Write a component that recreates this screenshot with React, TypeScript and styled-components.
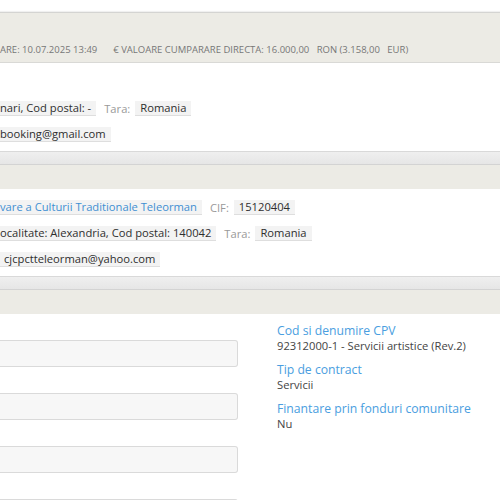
import styled, { createGlobalStyle } from "styled-components";

const Global = createGlobalStyle`
  html, body {
    margin: 0;
    padding: 0;
    background: #fff;
    font-family: "Open Sans", "Noto Sans", Arial, sans-serif;
    overflow: hidden;
  }
`;

export default function App() {
  return (
    <>
      <Global />
      <Page>
        <Summary>
          <SummaryItem>ARE: 10.07.2025 13:49</SummaryItem>
          <SummaryItem $gap>
            € VALOARE CUMPARARE DIRECTA: 16.000,00&nbsp;&nbsp; RON (3.158,00&nbsp;&nbsp; EUR)
          </SummaryItem>
        </Summary>

        <Body $top={38} $bottom={9}>
          <Row>
            <Chip $cut>nari, Cod postal: -</Chip>
            <Label>Tara:</Label>
            <Chip>Romania</Chip>
          </Row>
          <Row>
            <Chip $cut>booking@gmail.com</Chip>
          </Row>
        </Body>

        <Strip />
        <Head />
        <Body $top={11} $bottom={9}>
          <Row>
            <Chip $cut $link>vare a Culturii Traditionale Teleorman</Chip>
            <Label>CIF:</Label>
            <Chip>15120404</Chip>
          </Row>
          <Row>
            <Chip $cut>ocalitate: Alexandria, Cod postal: 140042</Chip>
            <Label>Tara:</Label>
            <Chip>Romania</Chip>
          </Row>
          <Row>
            <Chip $shift>cjcpctteleorman@yahoo.com</Chip>
          </Row>
        </Body>

        <Strip />
        <Head />
        <Columns>
          <Fields>
            {[1, 2, 3, 4].map(i => (
              <Input key={i} />
            ))}
          </Fields>
          <Details>
            <Detail>
              <DetailTitle>Cod si denumire CPV</DetailTitle>
              <DetailValue>92312000-1 - Servicii artistice (Rev.2)</DetailValue>
            </Detail>
            <Detail>
              <DetailTitle>Tip de contract</DetailTitle>
              <DetailValue>Servicii</DetailValue>
            </Detail>
            <Detail>
              <DetailTitle>Finantare prin fonduri comunitare</DetailTitle>
              <DetailValue>Nu</DetailValue>
            </Detail>
          </Details>
        </Columns>
      </Page>
    </>
  );
}

const Page = styled.div`
  width: 500px;
  height: 500px;
  overflow: hidden;
  padding-top: 12px;
  box-sizing: border-box;
`;

const Summary = styled.div`
  height: 51px;
  background: #ecebe5;
  border-top: 1px solid #d4d4d2;
  border-bottom: 1px solid #d9d9d6;
  box-shadow: 0 -1px 1px rgba(0, 0, 0, 0.06);
  display: flex;
  align-items: flex-end;
  padding-bottom: 5px;
  box-sizing: border-box;
  white-space: nowrap;
`;

const SummaryItem = styled.span<{ $gap?: boolean }>`
  font-size: 9.5px;
  line-height: 14px;
  color: #777;
  text-transform: uppercase;
  margin-left: ${p => (p.$gap ? "16px" : "0")};
`;

const Body = styled.div<{ $top: number; $bottom: number }>`
  background: #fff;
  padding: ${p => p.$top}px 0 ${p => p.$bottom}px;
  display: flex;
  flex-direction: column;
  gap: 11px;
`;

const Row = styled.div`
  display: flex;
  align-items: center;
  height: 15px;
  white-space: nowrap;
`;

const Chip = styled.span<{ $cut?: boolean; $link?: boolean; $shift?: boolean }>`
  font-size: 11.2px;
  line-height: 14px;
  color: ${p => (p.$link ? "#3f8fd2" : "#2e2e2e")};
  background: #f3f3f3;
  border-bottom: 1px solid #dedede;
  padding: 0 5px 0 ${p => (p.$cut ? "0" : "5px")};
  margin-left: ${p => (p.$shift ? "-1px" : "0")};
`;

const Label = styled.span`
  font-size: 11.2px;
  line-height: 14px;
  color: #999;
  margin: 0 5px 0 8px;
`;

const Strip = styled.div`
  height: 12px;
  background: linear-gradient(#efefef, #e6e6e6);
  border-top: 1px solid #d9d9d9;
  border-bottom: 1px solid #d3d3d3;
`;

const Head = styled.div`
  height: 24px;
  background: #ecebe5;
`;

const Columns = styled.div`
  display: grid;
  grid-template-columns: 238px 1fr;
  column-gap: 39px;
  background: #fff;
`;

const Fields = styled.div`
  display: flex;
  flex-direction: column;
  gap: 26px;
  padding-top: 26px;
`;

const Input = styled.div`
  height: 27px;
  background: #f7f7f7;
  border: 1px solid #dadada;
  border-left: none;
  border-radius: 0 3px 3px 0;
  box-sizing: border-box;
`;

const Details = styled.div`
  padding-top: 9px;
  display: flex;
  flex-direction: column;
  gap: 9px;
`;

const Detail = styled.div`
  display: flex;
  flex-direction: column;
`;

const DetailTitle = styled.span`
  font-size: 12.2px;
  line-height: 16px;
  color: #4a9ee0;
`;

const DetailValue = styled.span`
  font-size: 11.2px;
  line-height: 14px;
  color: #444;
`;
